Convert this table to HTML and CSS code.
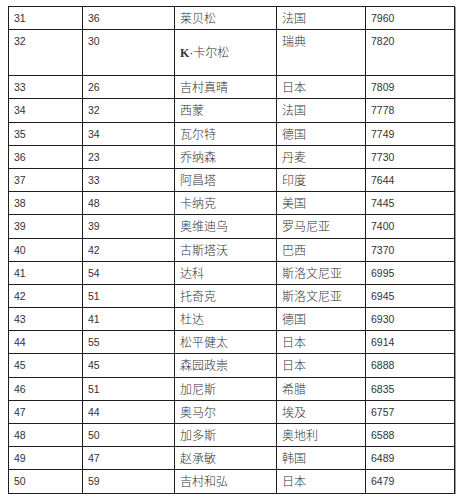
FILE: index.html
```html
<!DOCTYPE html>
<html lang="zh">
<head>
<meta charset="utf-8">
<link rel="stylesheet" href="styles.css">
</head>
<body>
<table class="rank">
<colgroup>
<col class="c1"><col class="c2"><col class="c3"><col class="c4"><col class="c5">
</colgroup>
<tbody>
<tr><td class="num">31</td><td class="num">36</td><td class="name">莱贝松</td><td class="name">法国</td><td class="num pts">7960</td></tr>
<tr class="tall"><td class="num">32</td><td class="num">30</td><td class="name mid"><span class="k">K</span><span class="dot">·</span>卡尔松</td><td class="name">瑞典</td><td class="num pts">7820</td></tr>
<tr><td class="num">33</td><td class="num">26</td><td class="name">吉村真晴</td><td class="name">日本</td><td class="num pts">7809</td></tr>
<tr><td class="num">34</td><td class="num">32</td><td class="name">西蒙</td><td class="name">法国</td><td class="num pts">7778</td></tr>
<tr><td class="num">35</td><td class="num">34</td><td class="name">瓦尔特</td><td class="name">德国</td><td class="num pts">7749</td></tr>
<tr><td class="num">36</td><td class="num">23</td><td class="name">乔纳森</td><td class="name">丹麦</td><td class="num pts">7730</td></tr>
<tr><td class="num">37</td><td class="num">33</td><td class="name">阿昌塔</td><td class="name">印度</td><td class="num pts">7644</td></tr>
<tr><td class="num">38</td><td class="num">48</td><td class="name">卡纳克</td><td class="name">美国</td><td class="num pts">7445</td></tr>
<tr><td class="num">39</td><td class="num">39</td><td class="name">奥维迪乌</td><td class="name">罗马尼亚</td><td class="num pts">7400</td></tr>
<tr><td class="num">40</td><td class="num">42</td><td class="name">古斯塔沃</td><td class="name">巴西</td><td class="num pts">7370</td></tr>
<tr><td class="num">41</td><td class="num">54</td><td class="name">达科</td><td class="name">斯洛文尼亚</td><td class="num pts">6995</td></tr>
<tr><td class="num">42</td><td class="num">51</td><td class="name">托奇克</td><td class="name">斯洛文尼亚</td><td class="num pts">6945</td></tr>
<tr><td class="num">43</td><td class="num">41</td><td class="name">杜达</td><td class="name">德国</td><td class="num pts">6930</td></tr>
<tr><td class="num">44</td><td class="num">55</td><td class="name">松平健太</td><td class="name">日本</td><td class="num pts">6914</td></tr>
<tr><td class="num">45</td><td class="num">45</td><td class="name">森园政崇</td><td class="name">日本</td><td class="num pts">6888</td></tr>
<tr><td class="num">46</td><td class="num">51</td><td class="name">加尼斯</td><td class="name">希腊</td><td class="num pts">6835</td></tr>
<tr><td class="num">47</td><td class="num">44</td><td class="name">奥马尔</td><td class="name">埃及</td><td class="num pts">6757</td></tr>
<tr><td class="num">48</td><td class="num">50</td><td class="name">加多斯</td><td class="name">奥地利</td><td class="num pts">6588</td></tr>
<tr><td class="num">49</td><td class="num">47</td><td class="name">赵承敏</td><td class="name">韩国</td><td class="num pts">6489</td></tr>
<tr><td class="num">50</td><td class="num">59</td><td class="name">吉村和弘</td><td class="name">日本</td><td class="num pts">6479</td></tr>
</tbody>
</table>
</body>
</html>
```
FILE: styles.css
```css
html, body {
  margin: 0;
  padding: 0;
  background: #fff;
}
body {
  padding: 6px 8px 0 8px;
}
.rank {
  border-collapse: collapse;
  table-layout: fixed;
  width: 446px;
  box-shadow: 1px 1px 0 #9a9a9a;
}
.c1 { width: 74px; }
.c2 { width: 92px; }
.c3 { width: 102px; }
.c4 { width: 89px; }
.c5 { width: 89px; }
.rank tr {
  height: 23.2px;
}
.rank tr.tall {
  height: 46px;
}
.rank td {
  border: 1px solid #1e1e1e;
  padding: 3px 5px 0 5px;
  vertical-align: top;
  color: #333;
  line-height: 16px;
  white-space: nowrap;
  overflow: hidden;
}
.num {
  font-family: "Liberation Sans", Arial, sans-serif;
  font-size: 10.5px;
}
.pts {
  color: #505050;
}
.name {
  font-family: "Noto Sans CJK SC", sans-serif;
  font-size: 12px;
  font-weight: 300;
}
.rank td.mid {
  vertical-align: middle;
  padding-top: 0;
}
.k {
  font-family: "Liberation Serif", serif;
  font-weight: bold;
}
.dot {
  font-family: "Liberation Sans", Arial, sans-serif;
}
```
